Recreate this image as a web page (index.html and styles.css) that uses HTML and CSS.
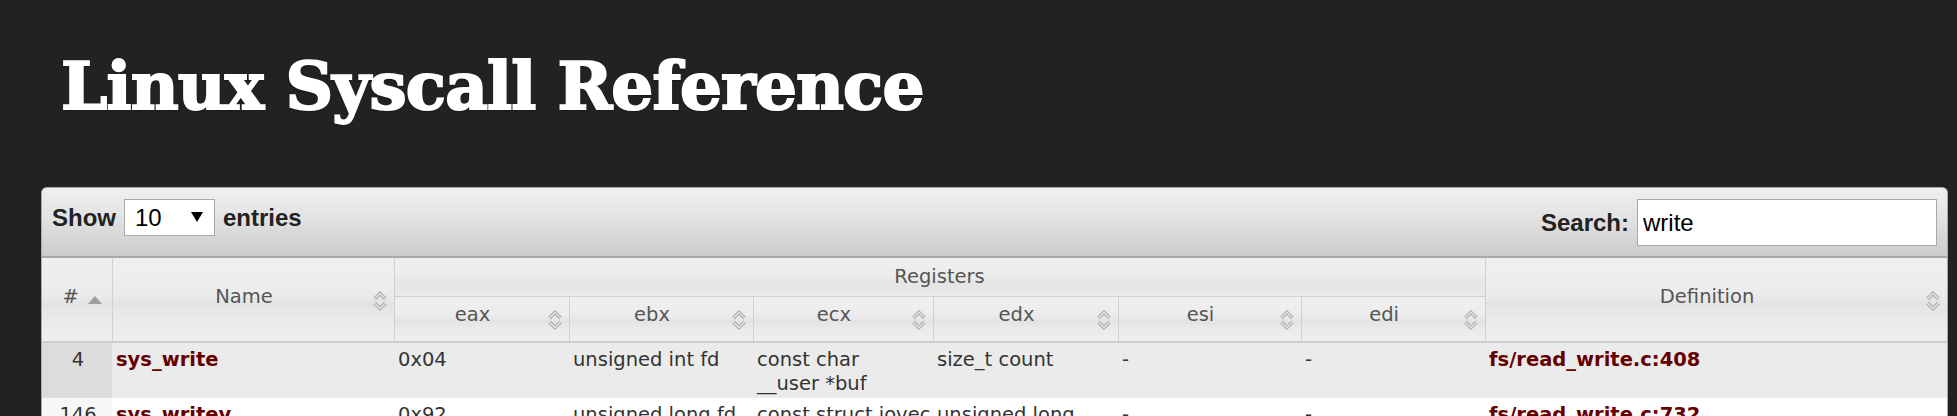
FILE: index.html
```html
<!DOCTYPE html>
<html lang="en">
<head>
<meta charset="utf-8">
<title>Linux Syscall Reference</title>
<link rel="stylesheet" href="styles.css">
</head>
<body>
<h1 class="title">Linux Syscall Reference</h1>
<div class="panel">
  <div class="toolbar">
    <label class="length">Show <span class="select-wrap"><select class="select"><option>10</option><option>25</option><option>50</option><option>100</option></select></span> entries</label>
    <label class="filter">Search: <input class="search" type="text" value="write" autofocus></label>
  </div>
  <table class="grid">
    <colgroup>
      <col class="c-num"><col class="c-name"><col class="c-eax"><col class="c-ebx"><col class="c-ecx"><col class="c-edx"><col class="c-esi"><col class="c-edi"><col class="c-def">
    </colgroup>
    <thead>
      <tr class="h1row">
        <th rowspan="2" class="th-num">#<span class="asc"></span></th>
        <th rowspan="2" class="th-sort">Name<svg class="sort" viewBox="0 0 16 22"><path class="o" d="M2.5 9 L8 3.5 L13.5 9 M2.5 13 L8 18.5 L13.5 13"/><path class="i" d="M2.5 9 L8 3.5 L13.5 9 M2.5 13 L8 18.5 L13.5 13"/></svg></th>
        <th colspan="6" class="th-group">Registers</th>
        <th rowspan="2" class="th-sort">Definition<svg class="sort" viewBox="0 0 16 22"><path class="o" d="M2.5 9 L8 3.5 L13.5 9 M2.5 13 L8 18.5 L13.5 13"/><path class="i" d="M2.5 9 L8 3.5 L13.5 9 M2.5 13 L8 18.5 L13.5 13"/></svg></th>
      </tr>
      <tr class="h2row">
        <th class="th-sort">eax<svg class="sort" viewBox="0 0 16 22"><path class="o" d="M2.5 9 L8 3.5 L13.5 9 M2.5 13 L8 18.5 L13.5 13"/><path class="i" d="M2.5 9 L8 3.5 L13.5 9 M2.5 13 L8 18.5 L13.5 13"/></svg></th>
        <th class="th-sort">ebx<svg class="sort" viewBox="0 0 16 22"><path class="o" d="M2.5 9 L8 3.5 L13.5 9 M2.5 13 L8 18.5 L13.5 13"/><path class="i" d="M2.5 9 L8 3.5 L13.5 9 M2.5 13 L8 18.5 L13.5 13"/></svg></th>
        <th class="th-sort">ecx<svg class="sort" viewBox="0 0 16 22"><path class="o" d="M2.5 9 L8 3.5 L13.5 9 M2.5 13 L8 18.5 L13.5 13"/><path class="i" d="M2.5 9 L8 3.5 L13.5 9 M2.5 13 L8 18.5 L13.5 13"/></svg></th>
        <th class="th-sort">edx<svg class="sort" viewBox="0 0 16 22"><path class="o" d="M2.5 9 L8 3.5 L13.5 9 M2.5 13 L8 18.5 L13.5 13"/><path class="i" d="M2.5 9 L8 3.5 L13.5 9 M2.5 13 L8 18.5 L13.5 13"/></svg></th>
        <th class="th-sort">esi<svg class="sort" viewBox="0 0 16 22"><path class="o" d="M2.5 9 L8 3.5 L13.5 9 M2.5 13 L8 18.5 L13.5 13"/><path class="i" d="M2.5 9 L8 3.5 L13.5 9 M2.5 13 L8 18.5 L13.5 13"/></svg></th>
        <th class="th-sort">edi<svg class="sort" viewBox="0 0 16 22"><path class="o" d="M2.5 9 L8 3.5 L13.5 9 M2.5 13 L8 18.5 L13.5 13"/><path class="i" d="M2.5 9 L8 3.5 L13.5 9 M2.5 13 L8 18.5 L13.5 13"/></svg></th>
      </tr>
    </thead>
    <tbody>
      <tr class="odd">
        <td class="num">4</td>
        <td><a class="link" href="#">sys_write</a></td>
        <td>0x04</td>
        <td>unsigned int fd</td>
        <td>const char <span class="arg">__user *buf</span></td>
        <td>size_t count</td>
        <td>-</td>
        <td>-</td>
        <td><a class="link" href="#">fs/read_write.c:408</a></td>
      </tr>
      <tr class="even">
        <td class="num">146</td>
        <td><a class="link" href="#">sys_writev</a></td>
        <td>0x92</td>
        <td>unsigned long fd</td>
        <td>const struct iovec <span class="arg">__user *vec</span></td>
        <td>unsigned long vlen</td>
        <td>-</td>
        <td>-</td>
        <td><a class="link" href="#">fs/read_write.c:732</a></td>
      </tr>
    </tbody>
  </table>
</div>
</body>
</html>
```
FILE: styles.css
```css
html, body {
  margin: 0;
  background: #222222;
}
body {
  padding: 0 9px 0 41px;
}
.title {
  margin: 53px 0 68px 0;
  padding-left: 20px;
  font-family: "DejaVu Serif", serif;
  font-weight: bold;
  font-size: 66px;
  line-height: 66px;
  letter-spacing: -0.9px;
  color: #ffffff;
  -webkit-text-stroke: 2px #ffffff;
  text-shadow: 0 1px 2px #000;
}
.panel {
  border: 1px solid #a9a9a9;
  border-bottom: none;
  border-radius: 6px 6px 0 0;
  overflow: hidden;
  background: #ffffff;
}
.toolbar {
  display: flex;
  justify-content: space-between;
  align-items: flex-start;
  padding: 11px 10px 10px 10px;
  border-bottom: 2px solid #a9a9a9;
  background: linear-gradient(to bottom, #f0f0f0 0%, #e2e2e2 45%, #cbcbcb 100%);
  font-family: "Liberation Sans", Arial, sans-serif;
  font-weight: bold;
  font-size: 24px;
  color: #222222;
}
.length, .filter {
  display: inline-flex;
  align-items: baseline;
  gap: 8px;
}
.select-wrap {
  position: relative;
  display: inline-block;
}
.select-wrap::after {
  content: "";
  position: absolute;
  right: 12px;
  top: 13px;
  border-left: 6px solid transparent;
  border-right: 6px solid transparent;
  border-top: 10px solid #000;
  pointer-events: none;
}
.select {
  -webkit-appearance: none;
  appearance: none;
  width: 91px;
  height: 37px;
  margin: 0;
  padding: 0 0 0 10px;
  border: 1px solid #a9a9a9;
  border-radius: 0;
  background: #ffffff;
  font-family: "Liberation Sans", Arial, sans-serif;
  font-size: 24px;
  color: #000;
}
.search {
  width: 300px;
  height: 47px;
  box-sizing: border-box;
  margin: 0;
  padding: 0 5px;
  border: 1px solid #a9a9a9;
  border-radius: 0;
  background: #ffffff;
  font-family: "Liberation Sans", Arial, sans-serif;
  font-size: 24px;
  color: #000;
  outline: none;
  caret-color: #000;
}
.grid {
  width: 100%;
  table-layout: fixed;
  border-collapse: collapse;
  font-family: "DejaVu Sans", Verdana, sans-serif;
  font-size: 19.5px;
  color: #333333;
}
.c-num { width: 70px; }
.c-name { width: 282px; }
.c-eax { width: 175px; }
.c-ebx { width: 184px; }
.c-ecx { width: 180px; }
.c-edx { width: 185px; }
.c-esi { width: 183px; }
.c-edi { width: 184px; }
.c-def { width: 462px; }

.grid th {
  position: relative;
  box-sizing: border-box;
  font-weight: normal;
  color: #555555;
  text-align: center;
  vertical-align: middle;
  padding: 0 22px 6px 4px;
  border-left: 1px solid #d0d0d0;
  border-right: 1px solid #d0d0d0;
  border-bottom: 1px solid #d0d0d0;
  background: linear-gradient(to bottom, #efefef 0%, #ececec 42%, #e3e3e3 56%, #eaeaea 72%, #eeeeee 100%);
}
.grid th:first-child { border-left: none; }
.h1row th { height: 38px; }
.h1row th.th-group {
  padding: 0 4px 1px 4px;
  background: linear-gradient(to bottom, #efefef 0%, #ececec 45%, #e4e4e4 70%, #ebebeb 100%);
}
.h2row th { height: 46px; padding-bottom: 8px; }
.grid thead tr:last-child th,
.grid th[rowspan] { border-bottom: 2px solid #cdcdcd; }
.grid th.th-num {
  text-align: center;
  padding-right: 16px;
}
.asc {
  position: absolute;
  right: 10px;
  top: 50%;
  margin-top: -4px;
  width: 0;
  height: 0;
  border-left: 7px solid transparent;
  border-right: 7px solid transparent;
  border-bottom: 8px solid #9e9e9e;
}
.sort {
  position: absolute;
  right: 6px;
  top: 50%;
  margin-top: -10px;
  width: 16px;
  height: 22px;
}
.sort path {
  fill: none;
  stroke-linejoin: miter;
  stroke-linecap: butt;
}
.sort .o {
  stroke: #ababab;
  stroke-width: 3.6;
}
.sort .i {
  stroke: #e6e6e6;
  stroke-width: 1.3;
}
.grid td {
  padding: 5px 2px 2px 4px;
  line-height: 24px;
  vertical-align: top;
  overflow-wrap: break-word;
}
.arg { white-space: nowrap; }
.odd td { background: #ebebeb; }
.odd td.num { background: #dcdcdc; }
.even td { background: #ffffff; }
.even td.num { background: #f7f7f7; }
.num { text-align: center; }
.link {
  color: #660000;
  font-weight: bold;
  text-decoration: none;
}
```
